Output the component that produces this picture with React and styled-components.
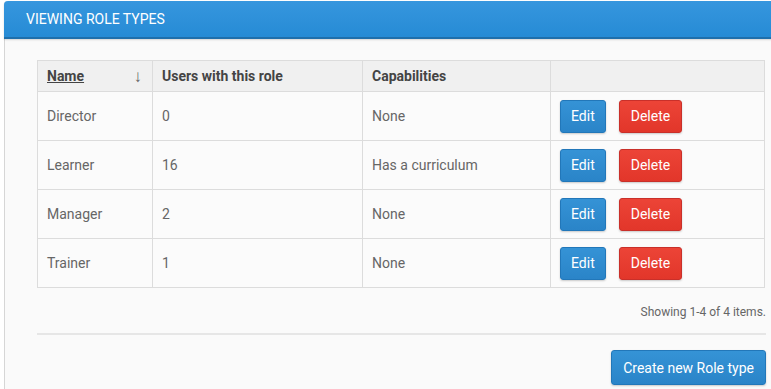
import styled, { createGlobalStyle } from "styled-components";

const Global = createGlobalStyle`
	html, body {
		margin: 0;
		background: #ffffff;
		overflow: hidden;
	}
	body {
		font-family: Roboto, "Noto Sans", sans-serif;
		color: #555;
	}
`;

const Page = styled.div`
	padding: 1px 0 0 4px;
	width: 800px;
`;

const Panel = styled.div`
	width: 793px;
	background: #fafafa;
	border: 1px solid #d6d6d6;
	border-top: none;
	border-radius: 4px 4px 0 0;
	height: 400px;
`;

const PanelHeader = styled.div`
	height: 36px;
	display: flex;
	align-items: center;
	padding-left: 22px;
	margin: 0 -1px;
	background: linear-gradient(to bottom, #3696de, #268bd5);
	border-bottom: 2px solid #1f6fab;
	border-radius: 4px 4px 0 0;
	color: #fff;
	font-size: 14px;
	text-transform: uppercase;
	box-shadow: 0 1px 2px rgba(0, 0, 0, 0.15);
`;

const Body = styled.div`
	padding: 21px 33px 0 32px;
`;

const Table = styled.table`
	width: 728px;
	table-layout: fixed;
	border-collapse: collapse;
	font-size: 14px;
`;

const Th = styled.th`
	box-sizing: border-box;
	background: #f0f0f0;
	border: 1px solid #dcdcdc;
	height: 31px;
	padding: 0 9px;
	text-align: left;
	font-weight: bold;
	color: #444;
	width: ${(p) => (p.$w ? `${p.$w}px` : "auto")};
`;

const SortLink = styled.div`
	display: flex;
	justify-content: space-between;
	align-items: center;
	span:first-child {
		text-decoration: underline;
	}
	span:last-child {
		font-weight: normal;
		font-size: 17px;
		color: #666;
		margin-right: 1px;
	}
`;

const Td = styled.td`
	background: #fbfbfb;
	border: 1px solid #dcdcdc;
	height: 48px;
	padding: 0 9px;
	color: #666;
`;

const Actions = styled.div`
	display: flex;
	gap: 13px;
`;

const Button = styled.button`
	font-family: Roboto, "Noto Sans", sans-serif;
	font-size: 14px;
	color: #fff;
	height: 33px;
	padding: 0 ${(p) => (p.$danger ? 11 : 10)}px;
	border-radius: 3px;
	cursor: pointer;
	border: 1px solid ${(p) => (p.$danger ? "#c9302a" : "#2277b9")};
	background: ${(p) =>
		p.$danger
			? "linear-gradient(to bottom, #ec4437, #e2362a)"
			: "linear-gradient(to bottom, #3593d6, #2a84c8)"};
	box-shadow: 0 1px 2px rgba(0, 0, 0, 0.2);
`;

const Summary = styled.div`
	text-align: right;
	font-size: 12px;
	color: #666;
	margin: 17px 0 0;
	width: 729px;
`;

const Rule = styled.hr`
	width: 729px;
	border: none;
	border-top: 2px solid #e6e6e6;
	margin: 14px 0 0;
`;

const Footer = styled.div`
	width: 729px;
	display: flex;
	justify-content: flex-end;
	padding-top: 15px;
`;

const CreateButton = styled(Button)`
	font-size: 14px;
	height: 35px;
	padding: 0 11px;
`;

const roles = [
	{ name: "Director", users: 0, caps: "None" },
	{ name: "Learner", users: 16, caps: "Has a curriculum" },
	{ name: "Manager", users: 2, caps: "None" },
	{ name: "Trainer", users: 1, caps: "None" },
];

const App = () => {
	return (
		<Page>
			<Global />
			<Panel>
				<PanelHeader>Viewing Role Types</PanelHeader>
				<Body>
					<Table>
						<thead>
							<tr>
								<Th $w={115}>
									<SortLink>
										<span>Name</span>
										<span>↓</span>
									</SortLink>
								</Th>
								<Th $w={210}>Users with this role</Th>
								<Th $w={188}>Capabilities</Th>
								<Th></Th>
							</tr>
						</thead>
						<tbody>
							{roles.map((r) => (
								<tr key={r.name}>
									<Td>{r.name}</Td>
									<Td>{r.users}</Td>
									<Td>{r.caps}</Td>
									<Td>
										<Actions>
											<Button>Edit</Button>
											<Button $danger>Delete</Button>
										</Actions>
									</Td>
								</tr>
							))}
						</tbody>
					</Table>
					<Summary>Showing 1-4 of 4 items.</Summary>
					<Rule />
					<Footer>
						<CreateButton>Create new Role type</CreateButton>
					</Footer>
				</Body>
			</Panel>
		</Page>
	);
};

export default App;
